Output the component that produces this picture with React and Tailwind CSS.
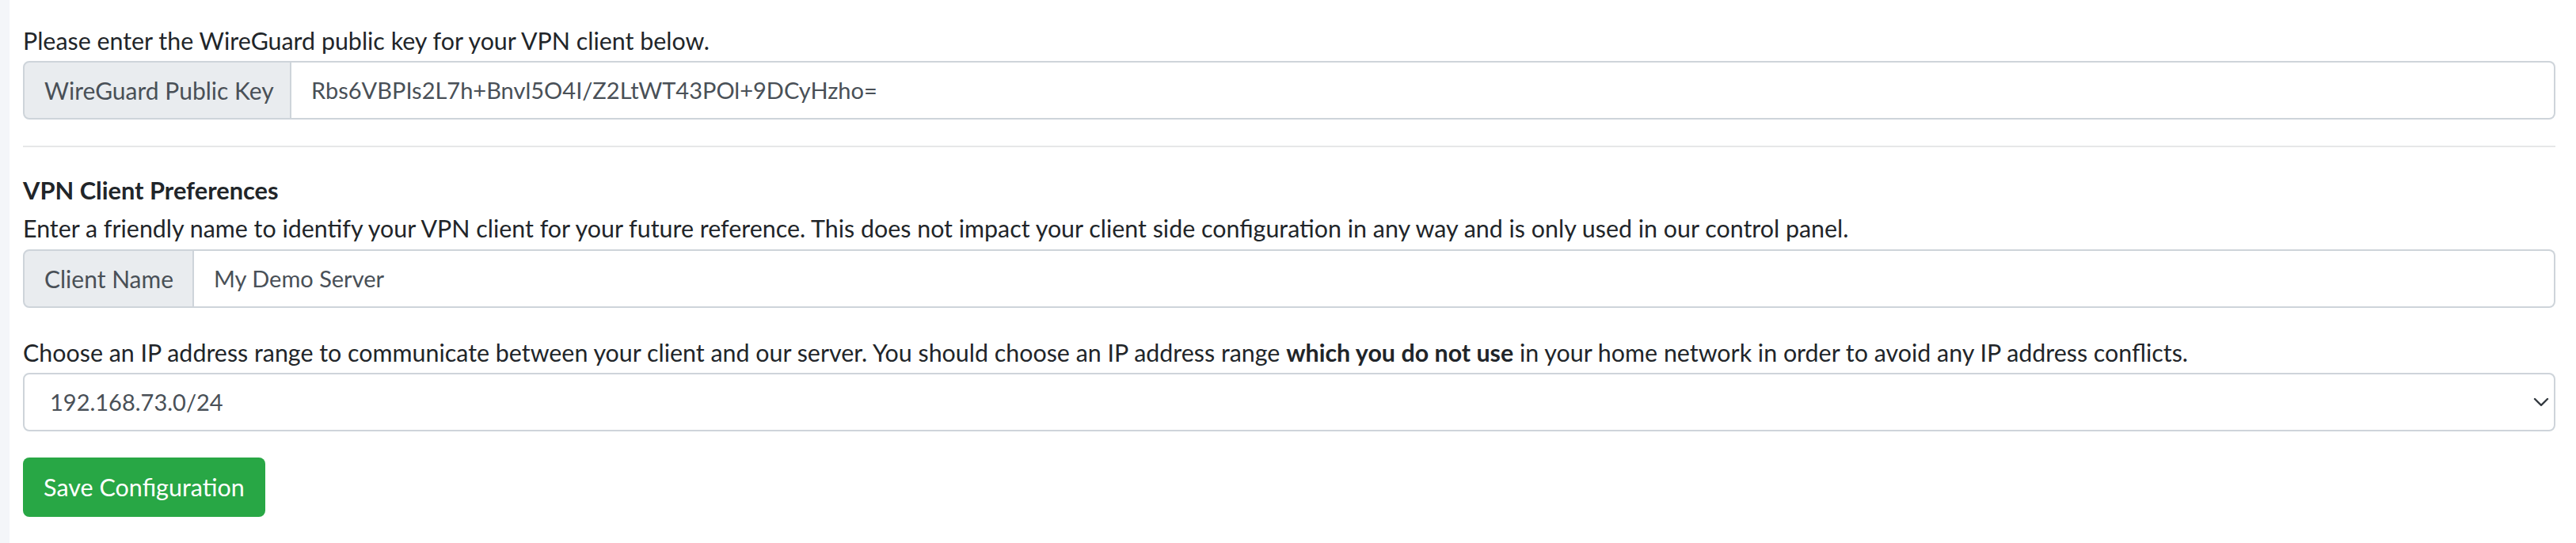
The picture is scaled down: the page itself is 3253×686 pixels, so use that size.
import React from "react";

export default function App() {
  return (
    <div className="flex min-h-[686px] w-full bg-[#f4f6f9] pl-[12px] font-[Lato,sans-serif] text-[30.4px] text-[#212529]">
      <div className="flex flex-1 flex-col bg-white pl-[17px] pr-[26px] pt-[27px]">
        <p className="mb-[2px] leading-[48px]">Please enter the WireGuard public key for your VPN client below.</p>
        <div className="flex h-[74px] w-full">
          <span className="flex w-[339px] shrink-0 items-center rounded-l-[8px] border-2 border-[#ced4da] bg-[#e9ecef] pl-[25px] text-[30px] text-[#495057]">
            WireGuard Public Key
          </span>
          <input
            readOnly
            defaultValue="Rbs6VBPIs2L7h+Bnvl5O4I/Z2LtWT43POl+9DCyHzho="
            className="min-w-0 flex-1 rounded-r-[8px] border-2 border-l-0 border-[#ced4da] bg-white pl-[25px] text-[29px] text-[#495057] outline-none"
          />
        </div>
        <hr className="mt-[33px] h-[2px] border-0 bg-[#e6e7e8]" />
        <h5 className="mt-[31px] text-[30.8px] font-bold leading-[47px]">VPN Client Preferences</h5>
        <p className="mb-[3px] leading-[48px]">
          Enter a friendly name to identify your VPN client for your future reference. This does not impact your client side configuration in any way and is only used in our control panel.
        </p>
        <div className="flex h-[74px] w-full">
          <span className="flex w-[216px] shrink-0 items-center rounded-l-[8px] border-2 border-[#ced4da] bg-[#e9ecef] pl-[25px] text-[30px] text-[#495057]">
            Client Name
          </span>
          <input
            readOnly
            defaultValue="My Demo Server"
            className="min-w-0 flex-1 rounded-r-[8px] border-2 border-l-0 border-[#ced4da] bg-white pl-[25px] text-[29px] text-[#495057] outline-none"
          />
        </div>
        <p className="mb-[2px] mt-[32px] leading-[48px]">
          Choose an IP address range to communicate between your client and our server. You should choose an IP address range <b className="font-bold">which you do not use</b> in your home network in order to avoid any IP address conflicts.
        </p>
        <div className="relative h-[74px] w-full">
          <select
            defaultValue="192.168.73.0/24"
            className="h-full w-full appearance-none rounded-[8px] border-2 border-[#ced4da] bg-white pl-[32px] text-[29px] text-[#495057] outline-none"
          >
            <option>192.168.73.0/24</option>
            <option>192.168.74.0/24</option>
            <option>10.8.0.0/24</option>
          </select>
          <svg
            className="pointer-events-none absolute right-[8px] top-1/2 -translate-y-1/2"
            width="20"
            height="12"
            viewBox="0 0 20 12"
            fill="none"
          >
            <path d="M2 2l8 8 8-8" stroke="#343a40" strokeWidth="2.4" strokeLinecap="round" strokeLinejoin="round" />
          </svg>
        </div>
        <div className="mt-[33px]">
          <button className="flex h-[75px] w-[306px] items-center justify-center rounded-[8px] bg-[#28a745] text-[30.5px] text-white">
            Save Configuration
          </button>
        </div>
      </div>
    </div>
  );
}
